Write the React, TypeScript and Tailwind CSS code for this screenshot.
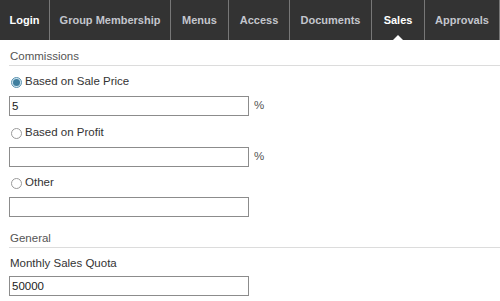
const tabs = [
  { label: 'Login', w: 'w-[50px]', bright: true },
  { label: 'Group Membership', w: 'w-[121px]' },
  { label: 'Menus', w: 'w-[58px]' },
  { label: 'Access', w: 'w-[61px]' },
  { label: 'Documents', w: 'w-[82px]' },
  { label: 'Sales', w: 'w-[53px]', active: true },
  { label: 'Approvals', w: 'w-[75px]' },
]

function Radio({ checked }: { checked?: boolean }) {
  if (checked) {
    return (
      <span className="flex h-[11px] w-[11px] items-center justify-center rounded-full border border-[#5c93b0] bg-[#cfe4ef]">
        <span className="h-[7px] w-[7px] rounded-full bg-[#3f7f9f]" />
      </span>
    )
  }
  return <span className="h-[11px] w-[11px] rounded-full border border-[#9a9a9a] bg-white" />
}

function Heading({ text, className }: { text: string; className: string }) {
  return (
    <div className={`box-border h-[18px] border-b border-[#dcdcdc] pl-[1px] text-[11.5px] leading-[16px] text-[#555] ${className}`}>
      {text}
    </div>
  )
}

function Field({ value, percent, className }: { value?: string; percent?: boolean; className: string }) {
  return (
    <div className={`flex items-center ${className}`}>
      <div className="box-border h-[20px] w-[240px] border border-[#8c8c8c] bg-white pl-[2px] text-[11.5px] leading-[18px] text-[#222]">
        {value}
      </div>
      {percent && <span className="ml-[5px] text-[11.5px] text-[#555]">%</span>}
    </div>
  )
}

export default function App() {
  return (
    <div className="h-[301px] w-[500px] bg-white font-['Liberation_Sans',Arial,sans-serif]">
      {/* tab bar */}
      <div className="flex h-[40px] bg-[#333333]">
        {tabs.map((t) => (
          <div
            key={t.label}
            className={`relative flex h-full items-center justify-center border-r border-[#777] text-[11px] font-bold ${t.w} ${
              t.active || t.bright ? 'text-white' : 'text-[#c3c6cd]'
            }`}
          >
            {t.label}
            {t.active && (
              <span className="absolute bottom-0 left-1/2 -ml-[5px] h-0 w-0 border-x-[5px] border-b-[5px] border-x-transparent border-b-white" />
            )}
          </div>
        ))}
      </div>

      <div className="pl-[9px] text-[11.5px] text-[#333]">
        <Heading text="Commissions" className="mt-[8px]" />

        <div className="mt-[8px] flex h-[16px] items-center gap-[3px] pl-[2px]">
          <Radio checked />
          <span>Based on Sale Price</span>
        </div>
        <Field value="5" percent className="mt-[6px]" />

        <div className="mt-[9px] flex h-[16px] items-center gap-[3px] pl-[2px]">
          <Radio />
          <span>Based on Profit</span>
        </div>
        <Field percent className="mt-[6px]" />

        <div className="mt-[8px] flex h-[16px] items-center gap-[3px] pl-[2px]">
          <Radio />
          <span>Other</span>
        </div>
        <Field className="mt-[6px]" />

        <Heading text="General" className="mt-[13px]" />

        <div className="mt-[7px] h-[16px] pl-[1px] leading-[16px]">Monthly Sales Quota</div>
        <Field value="50000" className="mt-[5px]" />
      </div>
    </div>
  )
}
